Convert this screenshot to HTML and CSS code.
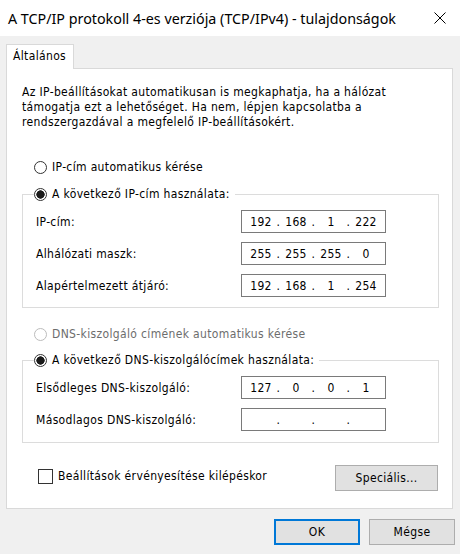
FILE: index.html
```html
<!DOCTYPE html>
<html lang="hu">
<head>
<meta charset="utf-8">
<title>TCP/IPv4 tulajdonságok</title>
<link rel="stylesheet" href="styles.css">
</head>
<body>
<div class="window">
  <div class="titlebar">
    <div class="title">A TCP/IP protokoll 4-es verziója (TCP/IPv4) - tulajdonságok</div>
    <div class="close" aria-label="Bezárás">
      <svg width="12" height="12" viewBox="0 0 12 12"><path d="M0.5 0.5 L11.5 11.5 M11.5 0.5 L0.5 11.5" stroke="#000" stroke-width="1" fill="none"/></svg>
    </div>
  </div>
  <div class="content">
    <div class="tabbar"><div class="tab">Általános</div></div>
    <div class="panel">
      <p class="intro">Az IP-beállításokat automatikusan is megkaphatja, ha a hálózat támogatja ezt a lehetőséget. Ha nem, lépjen kapcsolatba a rendszergazdával a megfelelő IP-beállításokért.</p>

      <div class="option opt-first"><span class="radio"></span><span>IP-cím automatikus kérése</span></div>

      <div class="group g1">
        <div class="ghead">
          <div class="gline-left"></div>
          <div class="option"><span class="radio on"></span><span>A következő IP-cím használata:</span></div>
          <div class="gline-right"></div>
        </div>
        <div class="gbody">
          <div class="field"><span class="lbl">IP-cím:</span><div class="ipbox"><span class="oct">192</span><span class="dot">.</span><span class="oct">168</span><span class="dot">.</span><span class="oct">1</span><span class="dot">.</span><span class="oct">222</span></div></div>
          <div class="field"><span class="lbl">Alhálózati maszk:</span><div class="ipbox"><span class="oct">255</span><span class="dot">.</span><span class="oct">255</span><span class="dot">.</span><span class="oct">255</span><span class="dot">.</span><span class="oct">0</span></div></div>
          <div class="field"><span class="lbl">Alapértelmezett átjáró:</span><div class="ipbox"><span class="oct">192</span><span class="dot">.</span><span class="oct">168</span><span class="dot">.</span><span class="oct">1</span><span class="dot">.</span><span class="oct">254</span></div></div>
        </div>
      </div>

      <div class="option opt-dns disabled"><span class="radio"></span><span>DNS-kiszolgáló címének automatikus kérése</span></div>

      <div class="group g2">
        <div class="ghead">
          <div class="gline-left"></div>
          <div class="option"><span class="radio on"></span><span>A következő DNS-kiszolgálócímek használata:</span></div>
          <div class="gline-right"></div>
        </div>
        <div class="gbody">
          <div class="field"><span class="lbl">Elsődleges DNS-kiszolgáló:</span><div class="ipbox"><span class="oct">127</span><span class="dot">.</span><span class="oct">0</span><span class="dot">.</span><span class="oct">0</span><span class="dot">.</span><span class="oct">1</span></div></div>
          <div class="field"><span class="lbl">Másodlagos DNS-kiszolgáló:</span><div class="ipbox"><span class="oct"></span><span class="dot">.</span><span class="oct"></span><span class="dot">.</span><span class="oct"></span><span class="dot">.</span><span class="oct"></span></div></div>
        </div>
      </div>

      <div class="bottomrow">
        <div class="check"><span class="box"></span><span>Beállítások érvényesítése kilépéskor</span></div>
        <button class="btn adv">Speciális...</button>
      </div>
    </div>
    <div class="actions">
      <button class="btn ok">OK</button>
      <button class="btn">Mégse</button>
    </div>
  </div>
</div>
</body>
</html>
```

FILE: styles.css
```css
* { box-sizing: border-box; }
html, body { margin: 0; padding: 0; }
body {
  width: 460px;
  height: 554px;
  background: #f0f0f0;
  font-family: "DejaVu Sans Condensed", "DejaVu Sans", sans-serif;
  font-size: 12px;
  letter-spacing: 0.35px;
  color: #000;
  overflow: hidden;
}
.window { width: 460px; height: 554px; }

.titlebar {
  height: 36px;
  background: #fff;
  display: flex;
  align-items: center;
  padding-left: 8px;
}
.title {
  font-family: "Noto Sans", sans-serif;
  font-size: 14.3px;
  letter-spacing: 0;
  color: #000;
  flex: 1;
  white-space: nowrap;
}
.close {
  width: 12px;
  height: 12px;
  margin-right: 14px;
  display: flex;
}

.content { padding: 8px 7px 0 6px; }

.tabbar { display: flex; }
.tab {
  position: relative;
  z-index: 1;
  height: 25px;
  width: 68px;
  margin-bottom: -1px;
  background: #fff;
  border: 1px solid #d9d9d9;
  border-bottom: none;
  padding: 3px 0 0 6px;
  line-height: 16px;
}

.panel {
  background: #fff;
  border: 1px solid #d9d9d9;
  padding: 16px 14px 17px 15px;
}

.intro {
  margin: 0;
  line-height: 15px;
  width: 385px;
}

.option {
  display: flex;
  align-items: center;
  height: 16px;
  white-space: nowrap;
}
.option .radio { margin-right: 5px; }
.opt-first { margin-top: 29px; margin-left: 12px; }
.opt-dns { margin-top: 18px; margin-left: 12px; }
.disabled { color: #6d6d6d; }

.radio {
  width: 13px;
  height: 13px;
  border-radius: 50%;
  border: 1px solid #333;
  background: #fff;
  flex: none;
}
.radio.on { background: radial-gradient(circle, #1a1a1a 0 3.9px, #fff 4.4px); }
.disabled .radio { border-color: #bcbcbc; }

.group { width: 417px; }
.g1 { margin-top: 11px; }
.g2 { margin-top: 10px; }

.ghead { display: flex; height: 16px; }
.gline-left {
  width: 12px;
  margin-top: 8px;
  border-top: 1px solid #dcdcdc;
  border-left: 1px solid #dcdcdc;
  flex: none;
}
.gline-right {
  flex: 1;
  margin-top: 8px;
  margin-left: 5px;
  border-top: 1px solid #dcdcdc;
  border-right: 1px solid #dcdcdc;
}
.gbody {
  border: 1px solid #dcdcdc;
  border-top: none;
  padding: 8px 0 10px 13px;
  display: flex;
  flex-direction: column;
  gap: 9px;
}
.g2 .gbody { padding-bottom: 11px; }

.field {
  display: grid;
  grid-template-columns: 205px 145px;
  align-items: center;
  height: 23px;
}
.ipbox {
  height: 23px;
  border: 1px solid #7a7a7a;
  background: #fff;
  display: flex;
  align-items: center;
  padding-left: 4px;
}
.oct { width: 30px; text-align: center; }
.dot { width: 5px; text-align: center; }

.bottomrow {
  margin-top: 22px;
  height: 26px;
  display: flex;
  align-items: center;
  justify-content: space-between;
}
.check {
  display: flex;
  align-items: center;
  margin-left: 16px;
  margin-top: -4px;
}
.check .box {
  width: 15px;
  height: 15px;
  border: 1px solid #333;
  background: #fff;
  margin-right: 5px;
}

.btn {
  font-family: inherit;
  font-size: 12px;
  letter-spacing: 0.35px;
  color: #000;
  background: #e1e1e1;
  border: 1px solid #adadad;
  padding: 0;
  margin: 0;
}
.adv { width: 103px; height: 26px; }

.actions {
  display: flex;
  justify-content: flex-end;
  gap: 9px;
  margin-top: 10px;
  margin-right: -2px;
}
.actions .btn { width: 86px; height: 26px; }
.actions .ok { border: 2px solid #0078d7; }
```
